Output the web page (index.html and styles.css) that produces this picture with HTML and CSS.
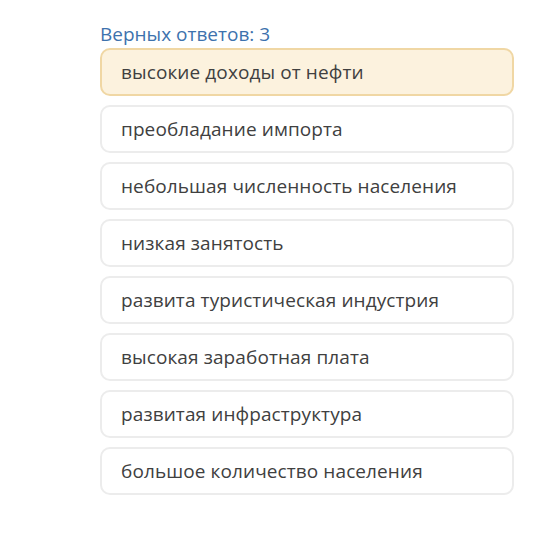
FILE: index.html
```html
<!DOCTYPE html>
<html lang="ru">
<head>
    <meta http-equiv="Content-Type" content="text/html; charset=UTF-8" />
    <title>Верных ответов</title>
    <link rel="stylesheet" href="styles.css">
</head>
<body>
    <div class="quiz">
        <div class="quizTitle">Верных ответов: 3</div>
        <div class="answerList">
            <div class="answer answerSelected">высокие доходы от нефти</div>
            <div class="answer">преобладание импорта</div>
            <div class="answer">небольшая численность населения</div>
            <div class="answer">низкая занятость</div>
            <div class="answer">развита туристическая индустрия</div>
            <div class="answer">высокая заработная плата</div>
            <div class="answer">развитая инфраструктура</div>
            <div class="answer">большое количество населения</div>
        </div>
    </div>
</body>
</html>
```

FILE: styles.css
```css
body {
    margin: 0;
    background: #ffffff;
    font-family: "Open Sans", "Noto Sans", sans-serif;
}

.quiz {
    width: 414px;
    padding: 21px 0 0 100px;
}

.quizTitle {
    color: #3d72ad;
    font-size: 19px;
    line-height: 26px;
    margin-bottom: 1px;
}

.answerList {
    display: flex;
    flex-direction: column;
    gap: 9px;
}

.answer {
    height: 44px;
    line-height: 44px;
    padding: 0 19px;
    border: 2px solid #ececec;
    border-radius: 10px;
    color: #404040;
    font-size: 19px;
    letter-spacing: 0.1px;
    white-space: nowrap;
}

.answerSelected {
    background: #fcf2de;
    border-color: #f0d7a4;
}
```
